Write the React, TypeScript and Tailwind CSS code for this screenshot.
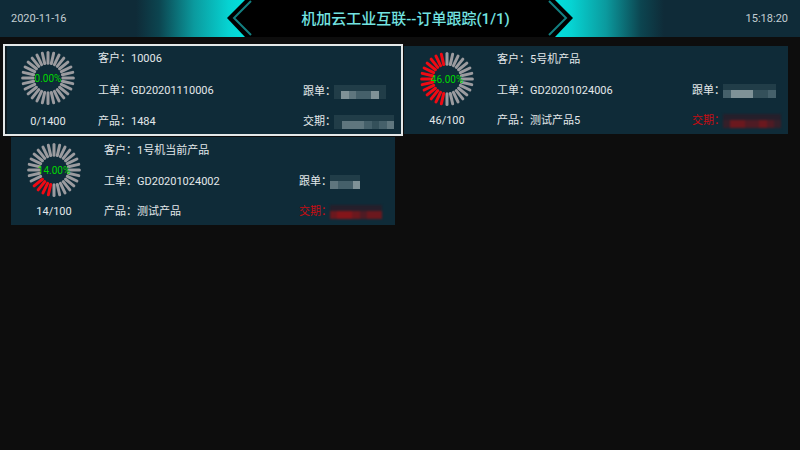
import { useId } from 'react'

type Mosaic = { width: number; cells: number[] }

type Order = {
  customer: string
  workOrder: string
  product: string
  done: number
  total: number
  late: boolean
  follower: Mosaic
  dueDate: Mosaic
}

const TICKS = 28

const orders: Order[] = [
  {
    customer: '10006',
    workOrder: 'GD20201110006',
    product: '1484',
    done: 0,
    total: 1400,
    late: false,
    follower: { width: 52, cells: [1, 5, 4, 3, 3, 5, 1] },
    dueDate: { width: 60, cells: [1, 4, 4, 4, 3, 2, 3, 4] },
  },
  {
    customer: '5号机产品',
    workOrder: 'GD20201024006',
    product: '测试产品5',
    done: 46,
    total: 100,
    late: true,
    follower: { width: 53, cells: [3, 5, 5, 5, 2, 2, 3] },
    dueDate: { width: 58, cells: [1, 3, 3, 2, 2, 3, 2, 1] },
  },
  {
    customer: '1号机当前产品',
    workOrder: 'GD20201024002',
    product: '测试产品',
    done: 14,
    total: 100,
    late: true,
    follower: { width: 30, cells: [4, 3, 3, 5] },
    dueDate: { width: 52, cells: [3, 4, 4, 3, 2, 3, 3] },
  },
]

const greyCells = ['', 'bg-[#213d48]', 'bg-[#34505a]', 'bg-[#45606a]', 'bg-[#5f767e]', 'bg-[#7f9297]']
const redCells = ['', 'bg-[#351f29]', 'bg-[#4f1b24]', 'bg-[#6b181e]', 'bg-[#84151a]', 'bg-[#a51216]']

function MaskedValue({ mosaic, late }: { mosaic: Mosaic; late?: boolean }) {
  const colors = late ? redCells : greyCells
  return (
    <span className={`flex h-3.5 flex-col ${late ? 'blur-[1px]' : ''}`} style={{ width: mosaic.width }}>
      <span className={`h-1.5 ${late ? 'bg-[#251f2b]' : 'bg-[#213d48]'}`} />
      <span className="flex flex-1">
        {mosaic.cells.map((level, i) => (
          <span key={i} className={`flex-1 ${colors[level]}`} />
        ))}
      </span>
    </span>
  )
}

function ProgressRing({ done, total }: { done: number; total: number }) {
  const percent = (done / total) * 100
  const filled = Math.round((percent / 100) * TICKS)
  return (
    <div className="grid place-items-center">
      <svg viewBox="-27 -27 54 54" className="col-start-1 row-start-1 size-[54px]">
        {Array.from({ length: TICKS }, (_, i) => (
          <line
            key={i}
            y1={14.8}
            y2={25.4}
            stroke={i > 0 && i <= filled ? '#f00a14' : '#9b9b9f'}
            strokeWidth={3}
            strokeLinecap="round"
            transform={`rotate(${(i * 360) / TICKS})`}
          />
        ))}
      </svg>
      <span className="col-start-1 row-start-1 pt-0.5 text-[10px] leading-none text-[#00d800]">
        {percent.toFixed(2)}%
      </span>
    </div>
  )
}

function OrderCard({ order, selected }: { order: Order; selected: boolean }) {
  return (
    <article
      className={`flex bg-[#0f2b38] ${
        selected
          ? 'z-10 -mx-2 -my-0.5 border-2 border-[#e4e8e8] pt-[5px] pr-2.5 pb-1 pl-4 shadow-[inset_2px_0_0_#0d1a20]'
          : 'pt-1.5 pr-2 pb-[5px] pl-4'
      }`}
    >
      <div className="flex w-[54px] shrink-0 flex-col items-center justify-between">
        <ProgressRing done={order.done} total={order.total} />
        <p className="leading-4">
          {order.done}/{order.total}
        </p>
      </div>
      <dl className="ml-[23px] flex flex-1 flex-col justify-between leading-4">
        <div className="flex">
          <dt>客户：</dt>
          <dd>{order.customer}</dd>
        </div>
        <div className="flex">
          <dt>工单：</dt>
          <dd>{order.workOrder}</dd>
        </div>
        <div className="flex">
          <dt>产品：</dt>
          <dd>{order.product}</dd>
        </div>
      </dl>
      <dl className="flex w-[88px] shrink-0 flex-col justify-end gap-[14px] leading-4">
        <div className="flex items-center">
          <dt className="w-[31px] shrink-0 whitespace-nowrap">跟单：</dt>
          <dd>
            <MaskedValue mosaic={order.follower} />
          </dd>
        </div>
        <div className={`flex items-center ${order.late ? 'text-[#c80c12]' : ''}`}>
          <dt className="w-[31px] shrink-0 whitespace-nowrap">交期：</dt>
          <dd>
            <MaskedValue mosaic={order.dueDate} late={order.late} />
          </dd>
        </div>
      </dl>
    </article>
  )
}

function TitleEdge({ flipped }: { flipped?: boolean }) {
  const id = useId()
  return (
    <svg viewBox="0 0 116 37" className={`h-full w-[116px] shrink-0 ${flipped ? '-scale-x-100' : ''}`}>
      <defs>
        <linearGradient id={id}>
          <stop offset="0" stopColor="#0f2b38" />
          <stop offset="0.2" stopColor="#0c4550" />
          <stop offset="0.5" stopColor="#0b9a9e" />
          <stop offset="0.8" stopColor="#06d3d2" />
          <stop offset="1" stopColor="#00e5e0" />
        </linearGradient>
      </defs>
      <rect width="116" height="37" fill={`url(#${id})`} />
      <path d="M116 0H109L91 18L109 37H116Z" fill="#000" />
      <path d="M115 1L98 18L115 35" fill="none" stroke="#137f81" strokeWidth="2" />
    </svg>
  )
}

function Header() {
  return (
    <header className="flex h-[37px] items-center bg-[#0f2b38] text-[#c3ced3]">
      <time className="flex-1 pt-0.5 pl-[11px]">2020-11-16</time>
      <TitleEdge />
      <h1 className="flex h-full w-[37%] items-center justify-center bg-black pt-0.5 pl-3 text-[15px] font-medium whitespace-nowrap text-[#73e3e1]">
        机加云工业互联--订单跟踪(1/1)
      </h1>
      <TitleEdge flipped />
      <time className="flex-1 pt-0.5 pr-3 text-right">15:18:20</time>
    </header>
  )
}

export default function App() {
  return (
    <div className="min-h-screen bg-[#0d0d0d] font-[Roboto,'Noto_Sans_CJK_SC',sans-serif] text-[11px] text-[#e3e8ea]">
      <Header />
      <main className="grid auto-rows-[88px] grid-cols-2 gap-x-[9px] gap-y-[3px] pt-[9px] pr-3 pl-[11px]">
        {orders.map((order, i) => (
          <OrderCard key={order.workOrder} order={order} selected={i === 0} />
        ))}
      </main>
    </div>
  )
}
